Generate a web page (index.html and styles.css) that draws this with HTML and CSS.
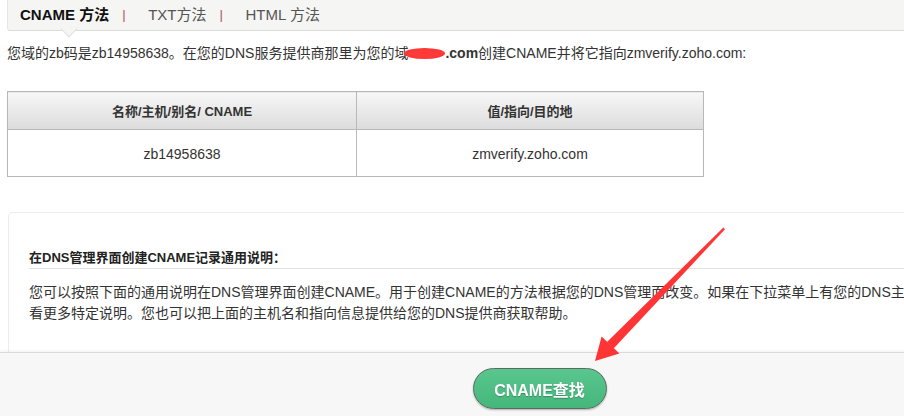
FILE: index.html
```html
<!DOCTYPE html>
<html lang="zh-CN">

<head>
    <meta charset="UTF-8">
    <meta name="viewport" content="width=device-width, initial-scale=1.0">
    <title>域名验证</title>
    <link rel="stylesheet" href="styles.css">
</head>

<body>
    <div class="page">
        <!-- method tabs -->
        <div class="tabs">
            <span class="tab active">CNAME 方法</span><span class="sep">|</span>
            <span class="tab">TXT方法</span><span class="sep">|</span>
            <span class="tab">HTML 方法</span>
        </div>

        <p class="intro">您域的zb码是zb14958638。在您的DNS服务提供商那里为您的域<b><span class="mask"></span>.com</b>创建CNAME并将它指向zmverify.zoho.com:</p>

        <table class="records">
            <tr>
                <th>名称/主机/别名/ CNAME</th>
                <th>值/指向/目的地</th>
            </tr>
            <tr>
                <td>zb14958638</td>
                <td>zmverify.zoho.com</td>
            </tr>
        </table>

        <!-- general help -->
        <div class="guide">
            <h4>在DNS管理界面创建CNAME记录通用说明：</h4>
            <p>您可以按照下面的通用说明在DNS管理界面创建CNAME。用于创建CNAME的方法根据您的DNS管理而改变。如果在下拉菜单上有您的DNS主机商，请选择查看更多特定说明。您也可以把上面的主机名和指向信息提供给您的DNS提供商获取帮助。</p>
        </div>
    </div>

    <div class="footer">
        <button type="button" class="btn">CNAME查找</button>
    </div>

    <svg class="arrow" width="904" height="416" viewBox="0 0 904 416">
        <polygon points="723.4,227.6 725,229.2 613.6,348.4 607,342" fill="#ff3535" />
        <polygon points="595,361 601.6,336.4 619.4,353.6" fill="#ff3535" />
    </svg>
</body>

</html>
```

FILE: styles.css
```css
* {
    box-sizing: border-box;
}

html,
body {
    height: 100%;
}

body {
    font-family: "Liberation Sans", Arial, "Noto Sans CJK SC", sans-serif;
    font-size: 14px;
    color: #333;
    margin: 0;
    padding: 0 0 0 7px;
    overflow: hidden;
    background-color: #fff;
}

.page {
    width: 1072px;
}

/* tabs */
.tabs {
    position: relative;
    display: flex;
    height: 31px;
    background-color: #f5f5f4;
    border-left: 1px solid #e6e6e6;
    border-bottom: 1px solid #dcdcdc;
    border-bottom-left-radius: 3px;
    font-size: 15px;
    line-height: 30px;
}

.tabs::after {
    content: "";
    position: absolute;
    left: 55px;
    top: 23px;
    width: 11px;
    height: 11px;
    background-color: #f5f5f4;
    border-right: 1px solid #e2e2e2;
    border-bottom: 1px solid #e2e2e2;
    transform: rotate(45deg);
}

.tab {
    padding: 0 13px 0 12px;
    color: #555;
}

.tab.active {
    color: #111;
    font-weight: bold;
}

.sep {
    width: 4px;
    margin-right: 10px;
    color: #a55;
    font-size: 13px;
}

.intro {
    margin: 13px 0 0;
    line-height: 18px;
    white-space: nowrap;
}

.intro b {
    font-weight: bold;
}

.mask {
    display: inline-block;
    width: 41px;
    height: 11px;
    margin-left: -4px;
    margin-right: 0;
    vertical-align: -1px;
    background-color: #ff3838;
    border-radius: 50%;
}

/* record table */
.records {
    margin-top: 29px;
    width: 697px;
    border-collapse: collapse;
    border: 1px solid #b8b8b8;
}

.records th {
    height: 38px;
    font-size: 13px;
    font-weight: bold;
    color: #333;
    background: linear-gradient(#f7f7f7, #dcdcdc);
    border: 1px solid #b8b8b8;
}

.records td {
    height: 47px;
    text-align: center;
    border: 1px solid #b8b8b8;
    padding-top: 2px;
}

.records th:first-child,
.records td:first-child {
    width: 349px;
}

/* help card */
.guide {
    margin: 35px 0 0 1px;
    padding: 35px 20px 80px;
    border: 1px solid #ececec;
    border-radius: 4px;
}

.guide h4 {
    margin: 0;
    font-size: 13px;
    line-height: 20px;
    color: #222;
    border-bottom: 1px solid #e3e3e3;
}

.guide p {
    width: 980px;
    margin: 13px 0 0;
    line-height: 21px;
}

/* bottom bar */
.footer {
    position: fixed;
    left: 0;
    bottom: 0;
    width: 1079px;
    height: 64px;
    padding-top: 15px;
    text-align: center;
    background-color: #f7f7f7;
    border-top: 1px solid #dadada;
    box-shadow: 0 -1px 3px rgba(0, 0, 0, 0.06);
}

.btn {
    width: 134px;
    height: 41px;
    font-family: "Liberation Sans", Arial, "Noto Sans CJK SC", sans-serif;
    font-size: 16px;
    font-weight: bold;
    color: #fff;
    background: linear-gradient(#59c68e, #45b77b);
    border: 1px solid #5a6a60;
    border-radius: 21px;
    box-shadow: 0 1px 2px rgba(0, 0, 0, 0.3);
    text-shadow: 0 1px 1px rgba(0, 0, 0, 0.25);
    cursor: pointer;
}

.arrow {
    position: fixed;
    left: 0;
    top: 0;
    pointer-events: none;
}
```
